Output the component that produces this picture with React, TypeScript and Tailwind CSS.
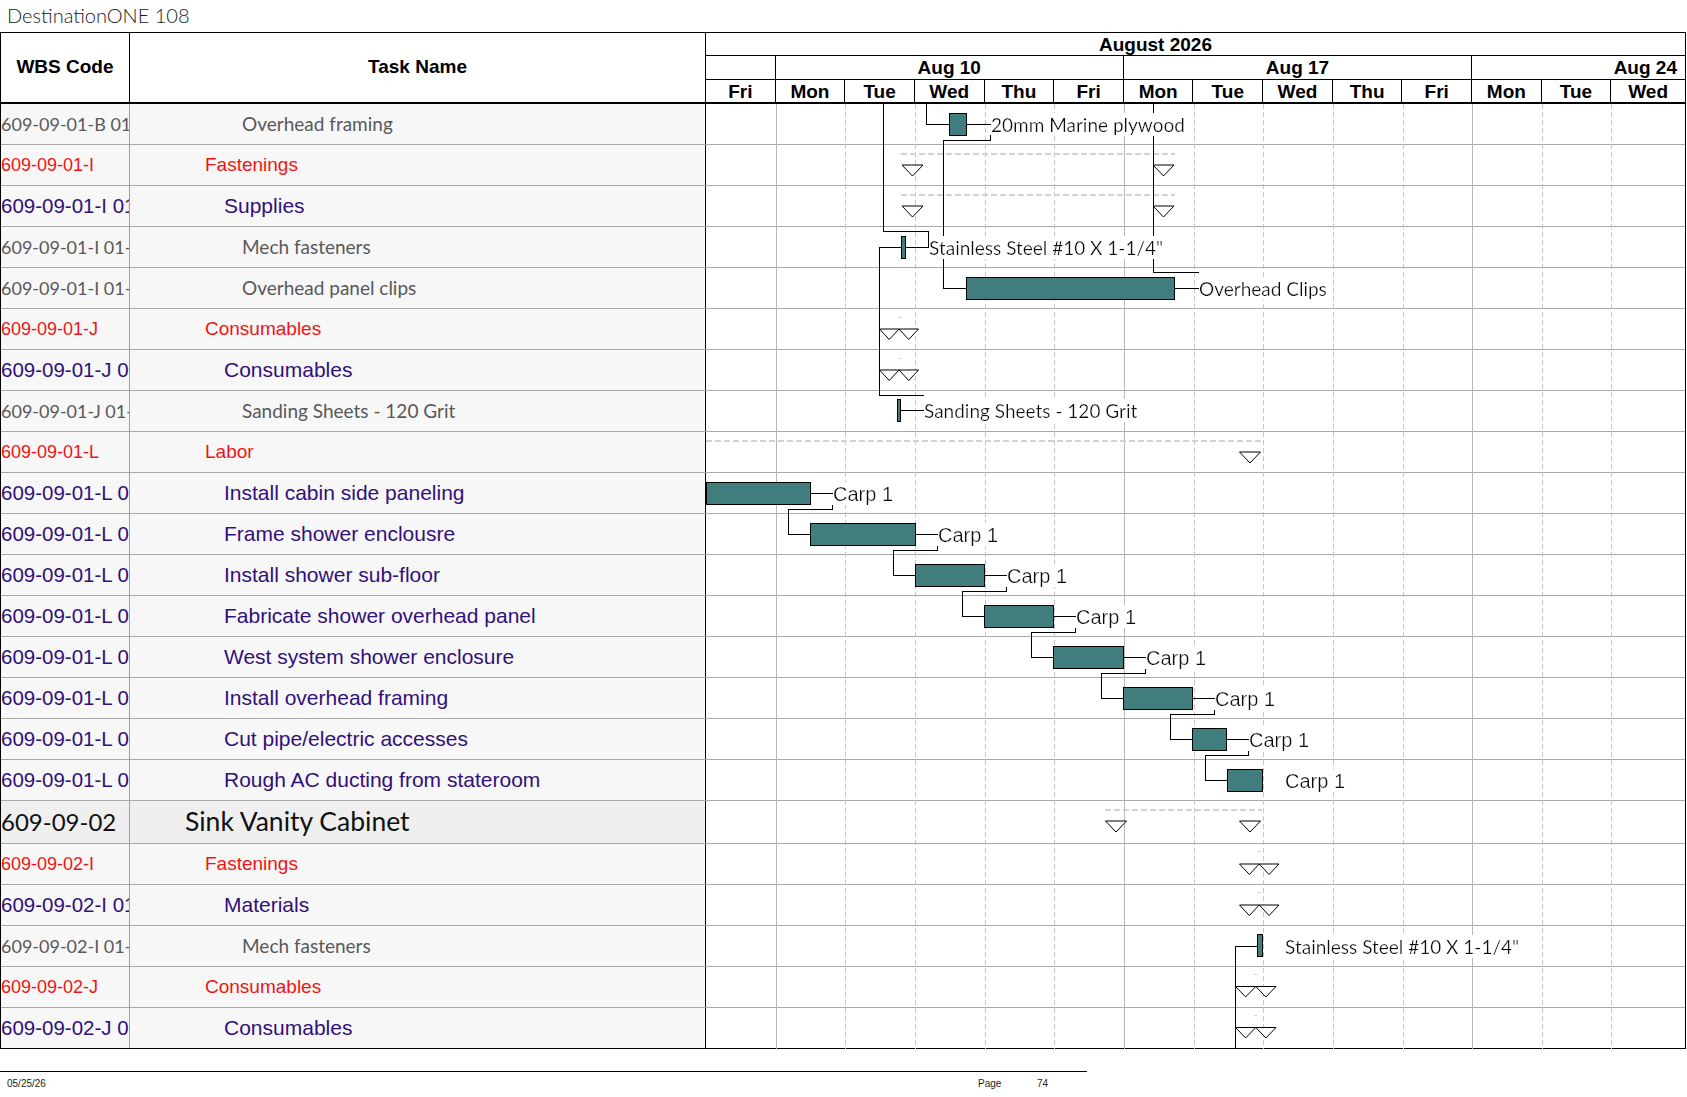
import React from 'react';

type Kind = 'item' | 'sum' | 'sub' | 'top';

interface Row {
  wbs: string;
  name: string;
  kind: Kind;
}

const ROWS: Row[] = [
  { wbs: '609-09-01-B 01', name: 'Overhead framing', kind: 'item' },
  { wbs: '609-09-01-I', name: 'Fastenings', kind: 'sum' },
  { wbs: '609-09-01-I 01', name: 'Supplies', kind: 'sub' },
  { wbs: '609-09-01-I 01-01', name: 'Mech fasteners', kind: 'item' },
  { wbs: '609-09-01-I 01-02', name: 'Overhead panel clips', kind: 'item' },
  { wbs: '609-09-01-J', name: 'Consumables', kind: 'sum' },
  { wbs: '609-09-01-J 01', name: 'Consumables', kind: 'sub' },
  { wbs: '609-09-01-J 01-01', name: 'Sanding Sheets - 120 Grit', kind: 'item' },
  { wbs: '609-09-01-L', name: 'Labor', kind: 'sum' },
  { wbs: '609-09-01-L 01', name: 'Install cabin side paneling', kind: 'sub' },
  { wbs: '609-09-01-L 02', name: 'Frame shower enclousre', kind: 'sub' },
  { wbs: '609-09-01-L 03', name: 'Install shower sub-floor', kind: 'sub' },
  { wbs: '609-09-01-L 04', name: 'Fabricate shower overhead panel', kind: 'sub' },
  { wbs: '609-09-01-L 05', name: 'West system shower enclosure', kind: 'sub' },
  { wbs: '609-09-01-L 06', name: 'Install overhead framing', kind: 'sub' },
  { wbs: '609-09-01-L 07', name: 'Cut pipe/electric accesses', kind: 'sub' },
  { wbs: '609-09-01-L 08', name: 'Rough AC ducting from stateroom', kind: 'sub' },
  { wbs: '609-09-02', name: 'Sink Vanity Cabinet', kind: 'top' },
  { wbs: '609-09-02-I', name: 'Fastenings', kind: 'sum' },
  { wbs: '609-09-02-I 01', name: 'Materials', kind: 'sub' },
  { wbs: '609-09-02-I 01-01', name: 'Mech fasteners', kind: 'item' },
  { wbs: '609-09-02-J', name: 'Consumables', kind: 'sum' },
  { wbs: '609-09-02-J 01', name: 'Consumables', kind: 'sub' },
];

const WBS_CLASS: Record<Kind, string> = {
  item: "font-['Lato',sans-serif] text-[18px] text-[#595959]",
  sum: "font-['Liberation_Sans',Arial,sans-serif] text-[18px] text-[#f01414]",
  sub: "font-['Liberation_Sans',Arial,sans-serif] text-[20.5px] text-[#32107a]",
  top: "font-['Lato',sans-serif] text-[24px] text-[#111111]",
};

const TASK_CLASS: Record<Kind, string> = {
  item: "pl-[112px] font-['Lato',sans-serif] text-[19px] text-[#595959]",
  sum: "pl-[75px] font-['Liberation_Sans',Arial,sans-serif] text-[19px] text-[#f01414]",
  sub: "pl-[94px] font-['Liberation_Sans',Arial,sans-serif] text-[21px] text-[#32107a]",
  top: "pl-[55px] font-['Lato',sans-serif] text-[26.5px] text-[#111111]",
};

const DAYS = ['Fri', 'Mon', 'Tue', 'Wed', 'Thu', 'Fri', 'Mon', 'Tue', 'Wed', 'Thu', 'Fri', 'Mon', 'Tue', 'Wed'];
const D = 69.65;

// labor bars, rows 9..16: [start, end] in px from gantt left
const LABOR: [number, number][] = [
  [0, 104],
  [104, 208.5],
  [208.5, 277.5],
  [278, 347],
  [347, 417],
  [417, 486],
  [486, 520],
  [521, 555.5],
];

const rowTop = (i: number) => (i <= 17 ? i * 41 : 740 + (i - 18) * 41);

const BAR = '#417d7d';
const LINE_FONT = 'Lato, sans-serif';
const ARIAL = "'Liberation Sans', Arial, sans-serif";

const Tri = ({ x, y, w = 21, h = 11 }: { x: number; y: number; w?: number; h?: number }) => (
  <path d={`M${x} ${y}L${x + w} ${y}L${x + w / 2} ${y + h}Z`} fill="white" stroke="#000" strokeWidth={1} />
);

const Label = ({ x, y, children, arial }: { x: number; y: number; children: React.ReactNode; arial?: boolean }) => (
  <text
    x={x}
    y={y}
    dominantBaseline="central"
    fontFamily={arial ? ARIAL : LINE_FONT}
    fontSize={arial ? 20 : 19}
    fill="#111"
    filter="url(#label-bg)"
  >
    {children}
  </text>
);

const GanttDrawing = () => {
  const grid = Array.from({ length: 13 }, (_, k) => k + 1);
  return (
    <svg
      className="absolute left-[705px] top-0 pointer-events-none"
      width={979}
      height={945}
      viewBox="0 0 979 945"
    >
      <defs>
        <filter id="label-bg" x="0" y="0" width="1" height="1">
          <feFlood floodColor="white" />
          <feComposite in="SourceGraphic" operator="over" />
        </filter>
      </defs>

      {/* day grid */}
      {grid.map((i) => {
        const x = Math.round(i * D) + 0.5;
        const monday = i === 1 || i === 6 || i === 11;
        return (
          <line
            key={i}
            x1={x}
            x2={x}
            y1={0}
            y2={945}
            stroke={monday ? '#b8b8b8' : '#c6c6c6'}
            strokeDasharray={monday ? undefined : '5 3'}
          />
        );
      })}

      <g shapeRendering="crispEdges" stroke="#d2d2d2" strokeWidth={2} strokeDasharray="6 3">
        {/* summary bars (dashed) */}
        <line x1={195} x2={469} y1={49.5} y2={49.5} />
        <line x1={195} x2={469} y1={90.5} y2={90.5} />
        <line x1={0} x2={555} y1={336.5} y2={336.5} />
        <line x1={399} x2={556} y1={705.5} y2={705.5} />
      </g>
      <g stroke="#d2d2d2" strokeWidth={1}>
        <line x1={192} x2={195} y1={213.5} y2={213.5} />
        <line x1={192} x2={195} y1={254.5} y2={254.5} />
        <line x1={552} x2={555} y1={747.5} y2={747.5} />
        <line x1={552} x2={555} y1={788.5} y2={788.5} />
        <line x1={548} x2={551} y1={870.5} y2={870.5} />
        <line x1={548} x2={551} y1={911.5} y2={911.5} />
      </g>

      <g fill="none" stroke="#000" strokeWidth={1} shapeRendering="crispEdges">
        {/* links into / out of upper materials */}
        <polyline points="220.5,0 220.5,20.5 243,20.5" />
        <polyline points="260,20.5 285,20.5" />
        <polyline points="284.5,31 284.5,36.5 237.5,36.5 237.5,184.5 260,184.5" />
        <polyline points="177.5,0 177.5,127.5 222.5,127.5 222.5,143.5 199,143.5" />
        <polyline points="195,143.5 173.5,143.5 173.5,291.5 218,291.5" />
        <polyline points="447.5,0 447.5,168.5 493,168.5" />
        <polyline points="468,184.5 493,184.5" />
        <polyline points="194,306.5 218,306.5" />
        {/* labor chain */}
        {LABOR.slice(0, 7).map(([, end], k) => {
          const top = rowTop(9 + k);
          const c = top + 20.5;
          const nextStart = LABOR[k + 1][0];
          const nc = rowTop(10 + k) + 20.5;
          const lx = Math.round(end + 22) + 0.5;
          const bx = Math.round(nextStart - 22) + 0.5;
          return (
            <g key={k}>
              <polyline points={`${end},${c} ${lx + 1},${c}`} />
              <polyline
                points={`${lx},${top + 32} ${lx},${top + 36.5} ${bx},${top + 36.5} ${bx},${nc} ${nextStart},${nc}`}
              />
            </g>
          );
        })}
        {/* lower section link */}
        <polyline points="529.5,945 529.5,842.5 551,842.5" />
      </g>

      {/* triangles */}
      <Tri x={196} y={61} />
      <Tri x={447} y={61} />
      <Tri x={196} y={102} />
      <Tri x={447} y={102} />
      <Tri x={173.5} y={225} w={19.5} h={10.5} />
      <Tri x={193} y={225} w={19.5} h={10.5} />
      <Tri x={173.5} y={266} w={19.5} h={10.5} />
      <Tri x={193} y={266} w={19.5} h={10.5} />
      <Tri x={533.5} y={348} />
      <Tri x={399.5} y={717} />
      <Tri x={533.5} y={717} />
      <Tri x={533.5} y={760} w={19.75} h={10.5} />
      <Tri x={553.25} y={760} w={19.75} h={10.5} />
      <Tri x={533.5} y={801} w={19.75} h={10.5} />
      <Tri x={553.25} y={801} w={19.75} h={10.5} />
      <Tri x={529.5} y={882.5} w={20.25} h={10.5} />
      <Tri x={549.75} y={882.5} w={20.25} h={10.5} />
      <Tri x={529.5} y={923.5} w={20.25} h={10.5} />
      <Tri x={549.75} y={923.5} w={20.25} h={10.5} />

      {/* bars */}
      <g fill={BAR} stroke="#000" strokeWidth={1} shapeRendering="crispEdges">
        <rect x={243.5} y={9.5} width={17} height={22} />
        <rect x={260.5} y={173.5} width={207.5} height={22} />
        <rect x={195.5} y={132.5} width={3.5} height={22} />
        <rect x={191.5} y={295.5} width={3} height={22} />
        <rect x={551.5} y={830.5} width={4.5} height={22} />
        {LABOR.map(([s, e], k) => (
          <rect key={k} x={s + 0.5} y={rowTop(9 + k) + 9.5} width={e - s} height={21.5} />
        ))}
      </g>

      {/* labels */}
      <Label x={285} y={20.5}>20mm Marine plywood</Label>
      <Label x={223} y={143.5}>Stainless Steel #10 X 1-1/4"</Label>
      <Label x={493} y={184.5}>Overhead Clips</Label>
      <Label x={218} y={306.5}>Sanding Sheets - 120 Grit</Label>
      <Label x={579} y={842.5}>Stainless Steel #10 X 1-1/4"</Label>
      {LABOR.map(([, e], k) => (
        <Label key={k} arial x={k === 7 ? 579 : Math.round(e + 23)} y={rowTop(9 + k) + 20.5}>
          Carp 1
        </Label>
      ))}
    </svg>
  );
};

const App: React.FC = () => {
  return (
    <div className="w-[1687px] h-[1097px] bg-white overflow-hidden font-['Liberation_Sans',Arial,sans-serif] text-black">
      {/* Title */}
      <div className="h-[32px] pl-[7px] pt-[1px] font-['Lato',sans-serif] font-light text-[20px] leading-[28px] text-[#1a1a1a]">
        DestinationONE 108
      </div>

      {/* Table */}
      <div className="w-[1686px] border-l border-r border-black">
        {/* Header */}
        <div className="flex h-[72px] border-t border-b-2 border-black bg-white">
          <div className="w-[129px] border-r border-black flex items-center justify-center font-bold text-[19px]">
            WBS Code
          </div>
          <div className="w-[576px] border-r border-black flex items-center justify-center font-bold text-[19px]">
            Task Name
          </div>
          <div className="w-[979px] flex flex-col font-bold text-[19px] leading-none">
            <div className="h-[23px] border-b border-black flex items-center pl-[393px]">August 2026</div>
            <div className="h-[24px] border-b border-black grid grid-cols-[69.65px_348.25px_348.25px_1fr]">
              <div className="border-r border-black" />
              <div className="border-r border-black flex items-center justify-center">Aug 10</div>
              <div className="border-r border-black flex items-center justify-center">Aug 17</div>
              <div className="flex items-center justify-end pr-[8px]">Aug 24</div>
            </div>
            <div className="h-[22px] grid grid-cols-[repeat(13,69.65px)_1fr]">
              {DAYS.map((d, i) => (
                <div
                  key={i}
                  className={`flex items-center justify-center ${i < 13 ? 'border-r border-black' : ''}`}
                >
                  {d}
                </div>
              ))}
            </div>
          </div>
        </div>

        {/* Body */}
        <div className="relative">
          {ROWS.map((r, i) => (
            <div
              key={i}
              className={`flex ${r.kind === 'top' ? 'h-[43px]' : 'h-[41px]'} border-b ${
                i === ROWS.length - 1 ? 'border-black' : 'border-[#a9a9a9]'
              }`}
            >
              <div
                className={`w-[129px] shrink-0 border-r border-[#a0a0a0] overflow-hidden whitespace-nowrap flex items-center ${
                  r.kind === 'top' ? 'bg-[#efefef]' : 'bg-[#f7f7f7]'
                } ${WBS_CLASS[r.kind]}`}
              >
                {r.wbs}
              </div>
              <div
                className={`w-[576px] shrink-0 border-r border-black overflow-hidden whitespace-nowrap flex items-center ${
                  r.kind === 'top' ? 'bg-[#efefef]' : 'bg-[#f7f7f7]'
                } ${TASK_CLASS[r.kind]}`}
              >
                {r.name}
              </div>
              <div className="flex-1 bg-white" />
            </div>
          ))}
          <GanttDrawing />
        </div>
      </div>

      {/* Footer */}
      <div className="mt-[22px] w-[1087px] border-t border-black flex pt-[6px] text-[10px] leading-[12px] text-[#222]">
        <span className="w-[978px] pl-[7px]">05/25/26</span>
        <span className="w-[59px]">Page</span>
        <span>74</span>
      </div>
    </div>
  );
};

export default App;
